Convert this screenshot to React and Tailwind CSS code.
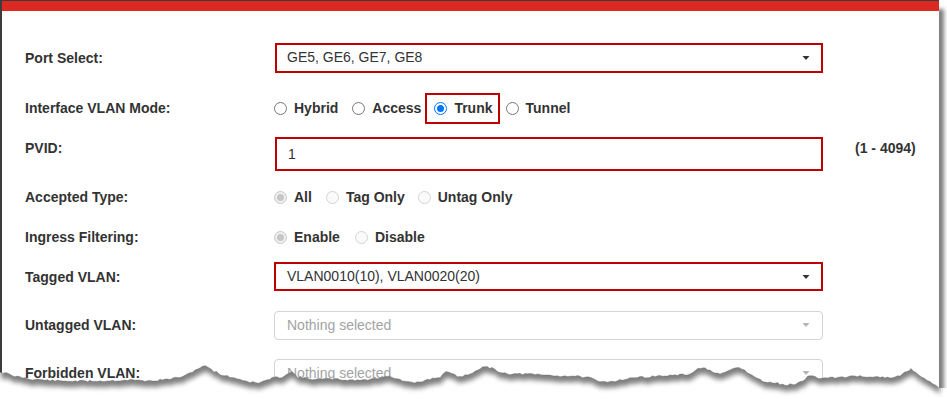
// App.jsx
import React from "react";

// Points along the torn paper edge at the bottom of the screenshot
const TEAR = [
  [0, 372], [6, 373], [12, 376], [20, 377], [30, 379], [60, 381], [100, 381], [130, 380],
  [150, 381], [170, 379], [185, 376], [195, 370], [203, 366], [208, 367], [214, 371],
  [222, 375], [235, 378], [250, 382], [258, 383], [265, 381], [272, 378], [282, 377],
  [288, 373], [292, 372], [298, 377], [310, 379], [330, 379], [350, 380], [365, 380],
  [378, 378], [385, 376], [392, 377], [400, 380], [412, 383], [420, 382], [430, 379],
  [440, 377], [446, 372], [452, 374], [460, 377], [470, 374], [478, 369], [485, 367],
  [492, 368], [500, 372], [510, 374], [525, 374], [545, 375], [560, 376], [575, 376],
  [590, 378], [600, 382], [615, 381], [630, 378], [645, 377], [660, 376], [680, 375],
  [690, 374], [698, 369], [703, 367], [710, 371], [720, 375], [730, 370], [736, 367],
  [742, 369], [750, 374], [758, 379], [765, 382], [775, 383], [785, 385], [795, 384],
  [803, 381], [810, 375], [818, 378], [830, 378], [845, 377], [860, 376], [875, 377],
  [890, 378], [900, 376], [907, 371], [911, 369], [916, 372], [922, 378], [930, 381],
  [936, 386], [939, 388],
];

// Add a little jitter so the edge looks ragged
const buildTear = () => {
  const out = [];
  let seed = 11;
  const rnd = () => {
    seed = (seed * 9301 + 49297) % 233280;
    return seed / 233280;
  };
  for (let i = 0; i < TEAR.length - 1; i++) {
    const [x1, y1] = TEAR[i];
    const [x2, y2] = TEAR[i + 1];
    const steps = Math.max(1, Math.round((x2 - x1) / 2.5));
    for (let s = 0; s < steps; s++) {
      const t = s / steps;
      out.push([x1 + (x2 - x1) * t, y1 + (y2 - y1) * t + (rnd() - 0.5) * 1.8]);
    }
  }
  out.push(TEAR[TEAR.length - 1]);
  return out.map(([x, y]) => `${x.toFixed(1)},${y.toFixed(1)}`).join(" ");
};

const tearLine = buildTear();

const TornEdge = () => (
  <svg
    className="absolute inset-0 pointer-events-none"
    width="947"
    height="399"
    viewBox="0 0 947 399"
  >
    <defs>
      <filter id="tearBlur" x="-5%" y="-50%" width="110%" height="200%">
        <feGaussianBlur stdDeviation="2.4" />
      </filter>
      <clipPath id="belowTear">
        <polygon points={`${tearLine} 947,388 947,399 0,399`} />
      </clipPath>
    </defs>
    <polygon points={`${tearLine} 947,388 947,399 0,399`} fill="#ffffff" />
    <g clipPath="url(#belowTear)">
      <polygon
        points={`0,320 ${tearLine} 939,320`}
        fill="#000"
        opacity="0.5"
        filter="url(#tearBlur)"
        transform="translate(1,6)"
      />
    </g>
    <polyline points={tearLine} fill="none" stroke="#666" strokeWidth="0.6" opacity="0.6" />
  </svg>
);

const Caret = ({ light }) => (
  <svg width="8" height="4" viewBox="0 0 8 4" className="shrink-0">
    <path d="M0.5 0h7L4 4z" fill={light ? "#b5b5b5" : "#333"} />
  </svg>
);

const Radio = ({ checked, disabled }) => {
  if (disabled && checked) {
    return (
      <span className="w-[13px] h-[13px] rounded-full border border-[#c8c8c8] bg-[#efefef] flex items-center justify-center shrink-0">
        <span className="w-[7px] h-[7px] rounded-full bg-[#c6c6c6]" />
      </span>
    );
  }
  if (disabled) {
    return <span className="w-[13px] h-[13px] rounded-full border border-[#d4d4d4] bg-[#fafafa] shrink-0" />;
  }
  if (checked) {
    return (
      <span className="w-[13px] h-[13px] rounded-full border-[1.5px] border-[#0075ff] bg-white flex items-center justify-center shrink-0">
        <span className="w-[7px] h-[7px] rounded-full bg-[#0075ff]" />
      </span>
    );
  }
  return <span className="w-[13px] h-[13px] rounded-full border border-[#767676] bg-white shrink-0" />;
};

const Option = ({ label, checked, disabled, className = "" }) => (
  <span className={`flex items-center gap-[7px] ${className}`}>
    <Radio checked={checked} disabled={disabled} />
    <span className="text-[14px] font-bold text-[#333] leading-4">{label}</span>
  </span>
);

const Label = ({ children, className = "" }) => (
  <div className={`w-[249px] shrink-0 text-[14px] font-bold text-[#333] leading-4 ${className}`}>
    {children}
  </div>
);

const App = () => {
  return (
    <div className="relative w-[947px] h-[399px] bg-white overflow-hidden font-['Liberation_Sans',Arial,sans-serif]">
      {/* Paper */}
      <div className="w-[939px] h-[396px] bg-white border-t border-l-2 border-[#3c3c3c] shadow-[5px_9px_4px_rgba(0,0,0,0.5)]">
        <div className="h-[10px] bg-[#dc2922]" />

        <div className="flex flex-col pt-[21px] pl-[23px]">
          {/* Port Select */}
          <div className="h-[51px] flex items-center">
            <Label>Port Select:</Label>
            <div className="ml-px w-[548px] h-[30px] border-2 border-[#c00000] bg-white flex items-center justify-between pl-[10px] pr-[11px]">
              <span className="text-[14px] text-[#333]">GE5, GE6, GE7, GE8</span>
              <Caret />
            </div>
          </div>

          {/* Interface VLAN Mode */}
          <div className="h-[50px] flex items-center">
            <Label>Interface VLAN Mode:</Label>
            <div className="flex items-center">
              <Option label="Hybrid" />
              <Option label="Access" className="ml-[14px]" />
              <span className="ml-[4px] h-[31px] border-2 border-[#c00000] flex items-center pl-[7px] pr-[5px]">
                <Option label="Trunk" checked />
              </span>
              <Option label="Tunnel" className="ml-[6px]" />
            </div>
          </div>

          {/* PVID */}
          <div className="h-[43px] flex items-start">
            <Label className="mt-[7px]">PVID:</Label>
            <div className="ml-px mt-[4px] w-[548px] h-[34px] border-2 border-[#c00000] bg-white flex items-center pl-[11px]">
              <span className="text-[14px] text-[#333]">1</span>
            </div>
            <div className="ml-[32px] mt-[7px] text-[14px] font-bold text-[#333] leading-4">(1 - 4094)</div>
          </div>

          {/* Accepted Type */}
          <div className="h-[42px] flex items-center">
            <Label>Accepted Type:</Label>
            <div className="flex items-center">
              <Option label="All" checked disabled />
              <Option label="Tag Only" disabled className="ml-[14px]" />
              <Option label="Untag Only" disabled className="ml-[13px]" />
            </div>
          </div>

          {/* Ingress Filtering */}
          <div className="h-[38px] flex items-center">
            <Label>Ingress Filtering:</Label>
            <div className="flex items-center">
              <Option label="Enable" checked disabled />
              <Option label="Disable" disabled className="ml-[15px]" />
            </div>
          </div>

          {/* Tagged VLAN */}
          <div className="h-[41px] flex items-center">
            <Label>Tagged VLAN:</Label>
            <div className="w-[549px] h-[29px] border-2 border-[#c00000] bg-white flex items-center justify-between pl-[11px] pr-[11px]">
              <span className="text-[14px] text-[#333]">VLAN0010(10), VLAN0020(20)</span>
              <Caret />
            </div>
          </div>

          {/* Untagged VLAN */}
          <div className="h-[56px] flex items-center">
            <Label>Untagged VLAN:</Label>
            <div className="w-[549px] h-[29px] rounded-[4px] border border-[#d4d4d4] bg-white flex items-center justify-between pl-[12px] pr-[12px]">
              <span className="text-[14px] text-[#a3a3a3]">Nothing selected</span>
              <Caret light />
            </div>
          </div>

          {/* Forbidden VLAN */}
          <div className="h-[40px] flex items-center">
            <Label>Forbidden VLAN:</Label>
            <div className="w-[549px] h-[29px] rounded-[4px] border border-[#d4d4d4] bg-white flex items-center justify-between pl-[12px] pr-[12px]">
              <span className="text-[14px] text-[#a3a3a3]">Nothing selected</span>
              <Caret light />
            </div>
          </div>
        </div>
      </div>

      <TornEdge />
    </div>
  );
};

export default App;
